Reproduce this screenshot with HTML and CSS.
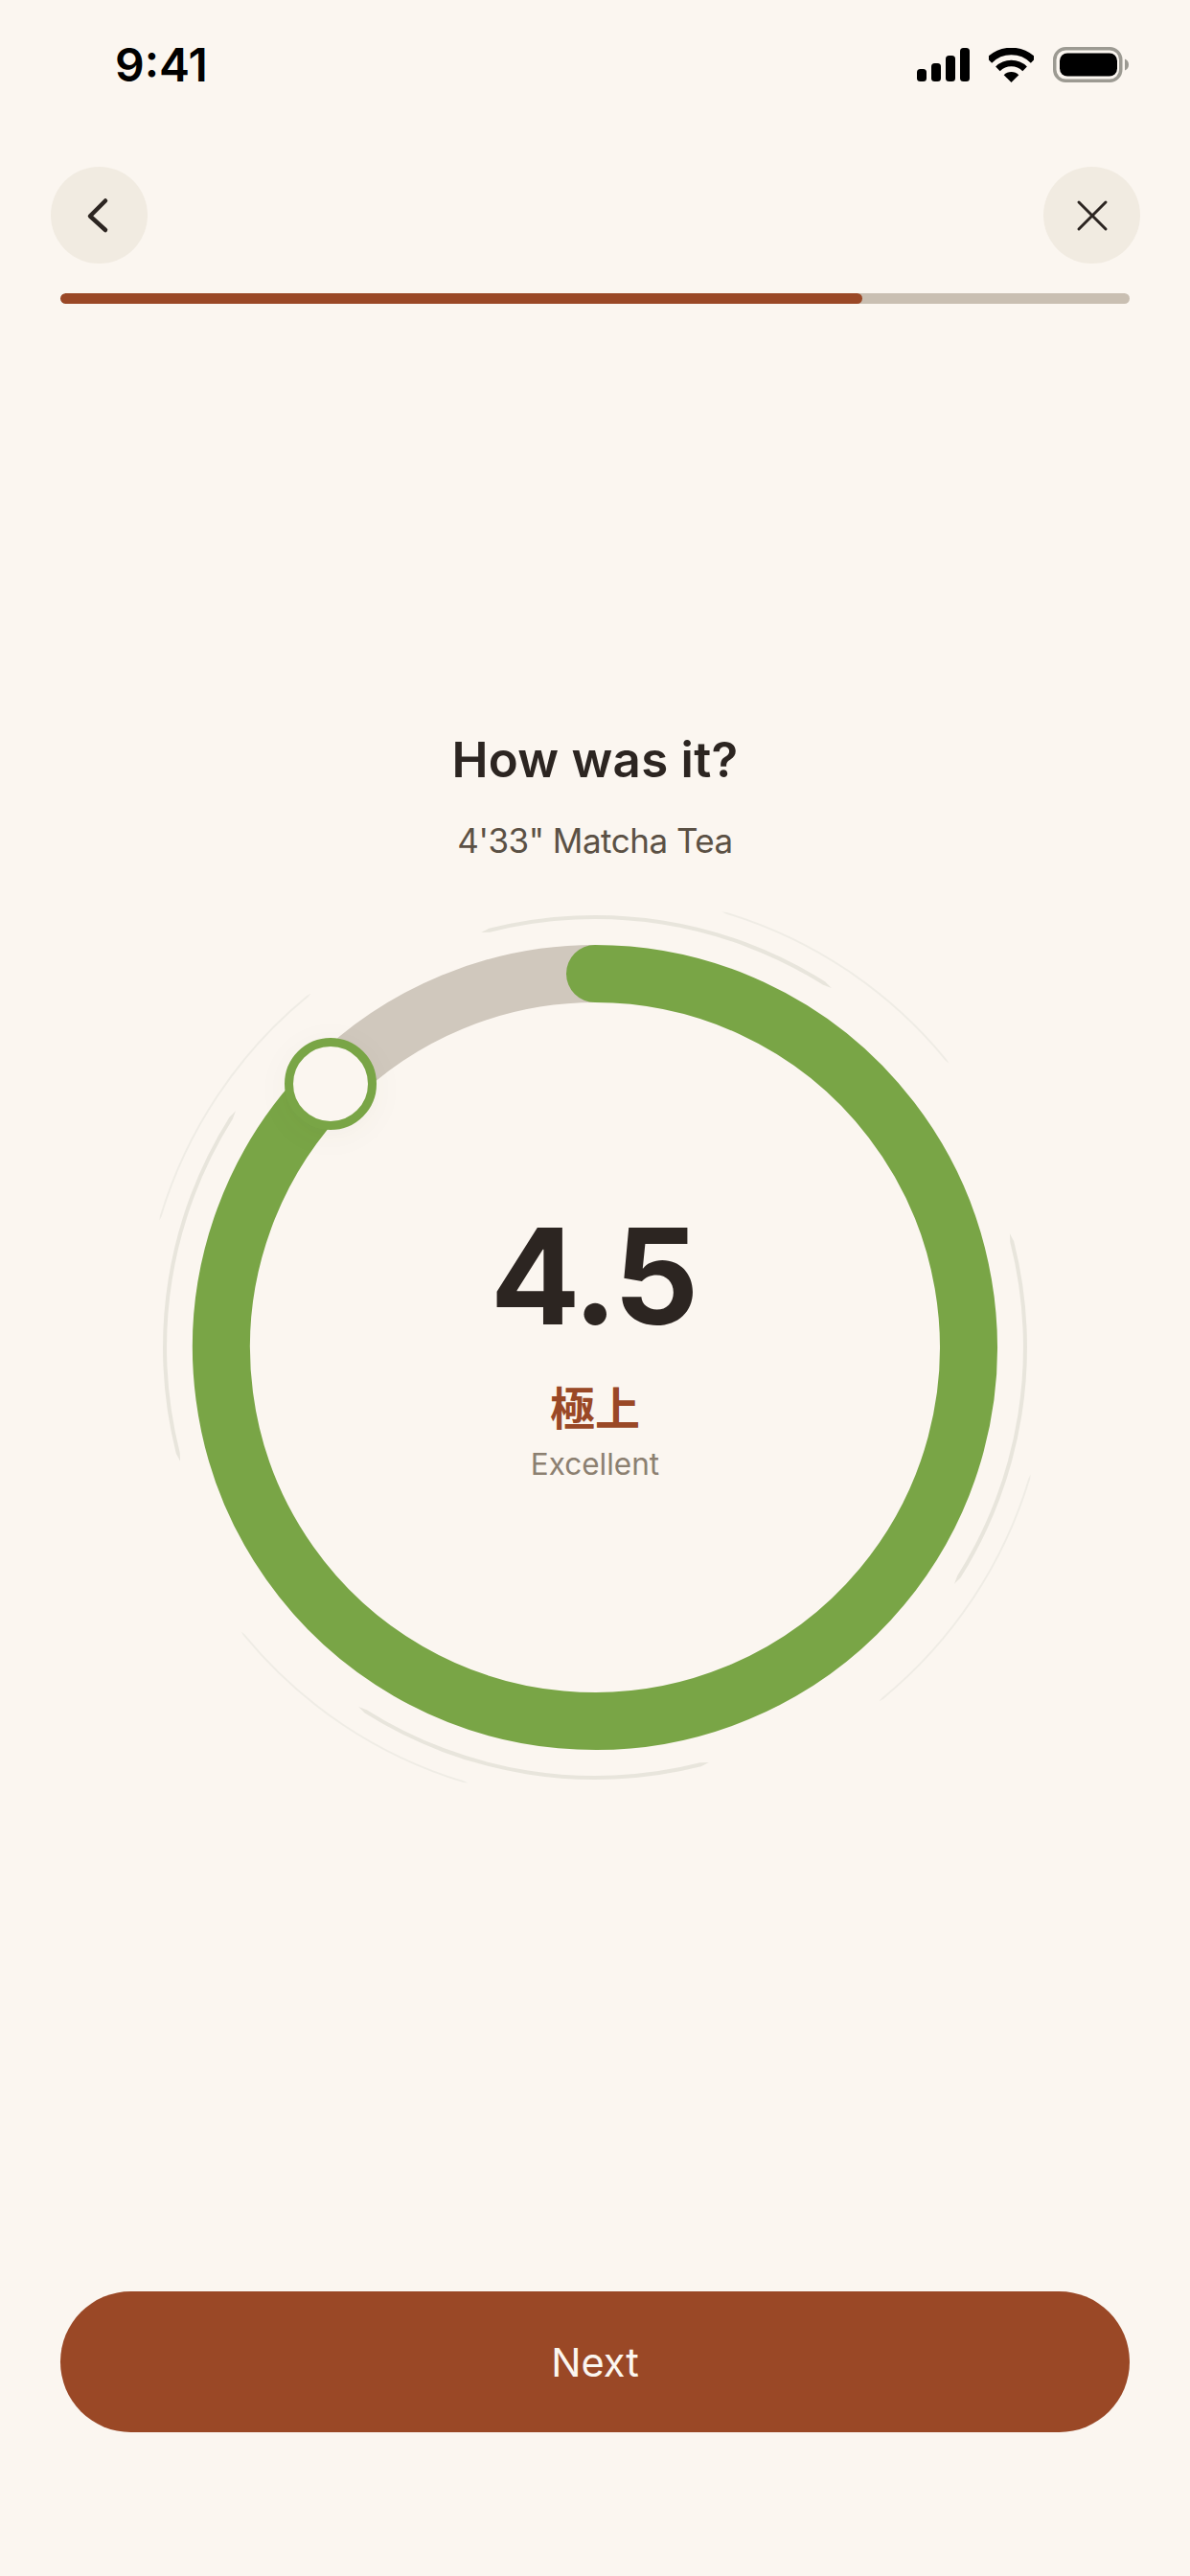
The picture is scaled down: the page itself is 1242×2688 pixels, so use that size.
FILE: index.html
```html
<!DOCTYPE html>
<html>
	<head>
		<meta charset="utf-8">
		<title>How was it?</title>
		<link rel="stylesheet" href="styles.css">
	</head>
	<body>
		<div class="screen">
			<!--status bar-->
			<div class="status">
				<span class="time">9:41</span>
				<div class="statusIcons">
					<svg class="signal" width="55" height="35" viewBox="0 0 55 35">
						<rect x="0" y="22" width="10" height="13" rx="3.5"/>
						<rect x="15" y="16" width="10" height="19" rx="3.5"/>
						<rect x="30" y="8" width="10" height="27" rx="3.5"/>
						<rect x="45" y="0" width="10" height="35" rx="3.5"/>
					</svg>
					<svg class="wifi" width="47" height="36" viewBox="0 0 47 36">
						<path class="wifiArc" stroke-width="7.5" d="M.5 13A32.5 32.5 0 0 1 46.5 13"/>
						<path class="wifiArc" stroke-width="6.5" d="M9.4 21.9A20 20 0 0 1 37.6 21.9"/>
						<path d="M23.5 36L15.7 28.2A11 11 0 0 1 31.3 28.2Z"/>
					</svg>
					<svg class="battery" width="79" height="37" viewBox="0 0 79 37">
						<rect class="batteryEdge" x="1.75" y="1.75" width="69" height="33.5" rx="11.5"/>
						<rect x="7" y="6.5" width="60" height="24" rx="8"/>
						<path class="batteryNub" d="M75 12.5C77.500 13.500 79 15.500 79 18.500C79 21.500 77.500 23.500 75 24.500Z"/>
					</svg>
				</div>
			</div>

			<!--back and close-->
			<div class="nav">
				<a class="navBtn" href="javascript:;">
					<svg width="40" height="44" viewBox="0 0 40 44">
						<path d="M26 6.500L10 22.500L26 37"/>
					</svg>
				</a>
				<a class="navBtn navClose" href="javascript:;">
					<svg width="40" height="40" viewBox="0 0 40 40">
						<path d="M6 6L34 34M34 6L6 34"/>
					</svg>
				</a>
			</div>

			<div class="progress"><div class="progressFill" style="width: 75%"></div></div>

			<div class="rating">
				<h1 class="title">How was it?</h1>
				<p class="subtitle">4'33" Matcha Tea</p>

				<!--dial, 0 0 is the middle of the ring-->
				<div class="dial">
					<svg class="dialSvg" width="960" height="960" viewBox="-480 -480 960 960">
						<defs>
							<path id="lineDark" d="M-185.100 -409L-177.700 -414.500A451 451 0 0 1 177.700 -414.500L185.100 -409L176.100 -410.800A447 447 0 0 0 -176.100 -410.800Z"/>
							<path id="lineLight" d="M-142.400 -451.600L-137.900 -454A474.500 474.500 0 0 1 137.900 -454L142.400 -451.600L137.400 -452.100A472.500 472.500 0 0 0 -137.400 -452.100Z"/>
						</defs>
						<use class="lineDark" href="#lineDark" transform="rotate(9)"/>
						<use class="lineDark" href="#lineDark" transform="rotate(99)"/>
						<use class="lineDark" href="#lineDark" transform="rotate(189)"/>
						<use class="lineDark" href="#lineDark" transform="rotate(279)"/>
						<use class="lineLight" href="#lineLight" transform="rotate(33.750)"/>
						<use class="lineLight" href="#lineLight" transform="rotate(123.750)"/>
						<use class="lineLight" href="#lineLight" transform="rotate(213.750)"/>
						<use class="lineLight" href="#lineLight" transform="rotate(303.750)"/>
						<path class="ringTrack" d="M0 -390A390 390 0 0 0 -275.800 -275.800"/>
						<path class="ringValue" d="M0 -390A390 390 0 1 1 -275.800 -275.800"/>
						<circle class="knob" cx="-276" cy="-275" r="43.500"/>
					</svg>
					<div class="dialText">
						<div class="score">4.5</div>
						<div class="scoreJa" lang="ja">極上</div>
						<div class="scoreEn">Excellent</div>
					</div>
				</div>
			</div>

			<a class="nextBtn" href="javascript:;">Next</a>
		</div>
	</body>
</html>
```

FILE: styles.css
```css
*{
	margin: 0px;
	padding: 0px;
	box-sizing: border-box;
}
body{
	background-color: #fbf6f0;
	font-family: "Inter", "Noto Sans", sans-serif;
}
.screen{
	width: 1242px;
	height: 2688px;
	display: flex;
	flex-direction: column;
	overflow: hidden;
}

/* status bar */
.status{
	height: 86px;
	padding: 49px 64px 0px 120px;
	display: flex;
	justify-content: space-between;
	align-items: center;
}
.time{
	font-size: 48px;
	line-height: 37px;
	font-weight: 600;
	color: #000000;
}
.statusIcons{
	display: flex;
	align-items: center;
	gap: 20px;
}
.statusIcons svg{
	display: block;
}
.wifiArc{
	fill: none;
	stroke: #000000;
}
.batteryEdge{
	fill: none;
	stroke: #9c9a92;
	stroke-width: 3.500px;
}
.batteryNub{
	fill: #9c9a92;
}

/* nav */
.nav{
	margin-top: 88px;
	padding: 0px 52px 0px 53px;
	display: flex;
	justify-content: space-between;
}
.navBtn{
	width: 101px;
	height: 101px;
	border-radius: 50%;
	background-color: #f1ebe1;
	display: flex;
	align-items: center;
	justify-content: center;
}
.navBtn svg{
	display: block;
	fill: none;
	stroke: #2c2521;
	stroke-width: 4.500px;
	stroke-linecap: round;
	stroke-linejoin: round;
}
.navClose svg{
	stroke-width: 3px;
}

/* progress */
.progress{
	margin: 31px 63px 0px;
	height: 11px;
	border-radius: 6px;
	background-color: #c9bfb2;
	overflow: hidden;
}
.progressFill{
	height: 100%;
	border-radius: 6px;
	background-color: #9a4826;
}

/* rating */
.rating{
	display: flex;
	flex-direction: column;
	align-items: center;
	text-align: center;
}
.title{
	margin-top: 446px;
	font-size: 51px;
	line-height: 60px;
	font-weight: 600;
	letter-spacing: 0.3px;
	color: #2c2521;
}
.subtitle{
	margin-top: 32px;
	font-size: 35px;
	line-height: 44px;
	font-weight: 400;
	letter-spacing: -0.5px;
	color: #5b5145;
}
.dial{
	margin-top: 27px;
	width: 960px;
	height: 960px;
	position: relative;
}
.dialSvg{
	display: block;
}
.lineDark{
	fill: #e8e5dc;
}
.lineLight{
	fill: #efece5;
}
.ringTrack{
	fill: none;
	stroke: #d0c8bd;
	stroke-width: 60px;
}
.ringValue{
	fill: none;
	stroke: #79a546;
	stroke-width: 60px;
	stroke-linecap: round;
}
.knob{
	fill: #fbf6f0;
	stroke: #79a546;
	stroke-width: 9px;
	filter: drop-shadow(0px 6px 14px rgba(60,40,20,0.04));
}
.dialText{
	position: absolute;
	left: 0px;
	right: 0px;
	top: 336px;
}
.score{
	padding-right: 4px;
	font-size: 139px;
	line-height: 140px;
	font-weight: 700;
	letter-spacing: -3px;
	color: #2c2521;
}
.scoreJa{
	margin-top: 37px;
	font-family: "Noto Sans CJK JP", "Noto Sans CJK TC", sans-serif;
	font-size: 47px;
	line-height: 56px;
	font-weight: 700;
	color: #9a4826;
}
.scoreEn{
	margin-top: 15px;
	font-size: 31.500px;
	line-height: 36px;
	font-weight: 400;
	color: #8c8071;
}

/* next */
.nextBtn{
	margin: auto 63px 150px;
	height: 147px;
	border-radius: 74px;
	background-color: #9a4826;
	color: #fbf6f0;
	font-size: 41.500px;
	font-weight: 400;
	display: flex;
	align-items: center;
	justify-content: center;
	text-decoration: none;
}
```
